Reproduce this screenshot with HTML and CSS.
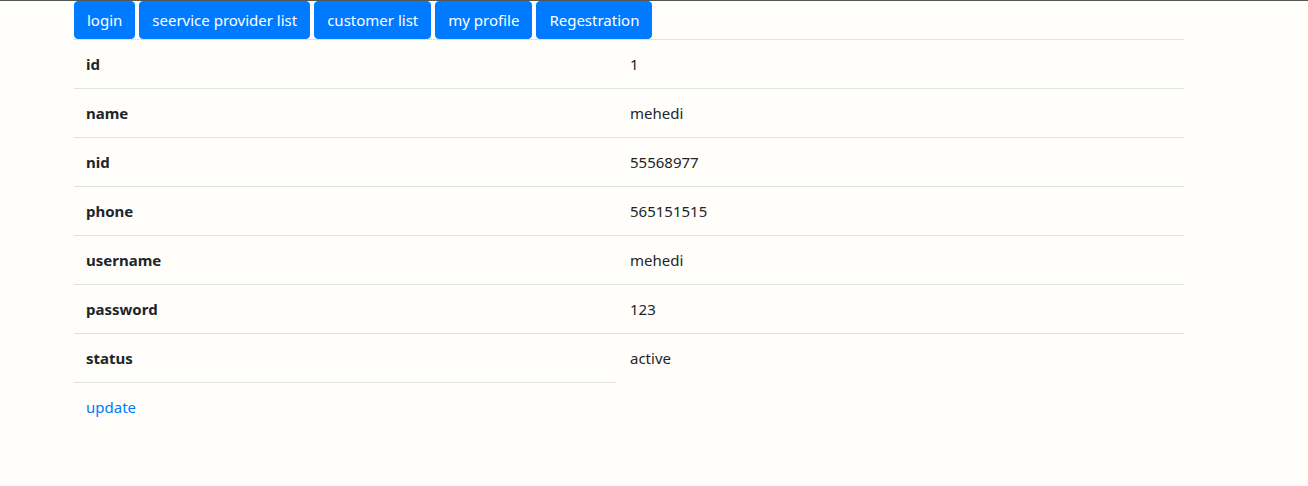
FILE: index.html
```html
<!DOCTYPE html>
<html>
<head>
<meta charset="utf-8">
<link rel="stylesheet" href="styles.css">
</head>
<body>
<div class="container">
  <nav class="nav">
    <a class="btn" href="#">login</a>
    <a class="btn" href="#">seervice provider list</a>
    <a class="btn" href="#">customer list</a>
    <a class="btn" href="#">my profile</a>
    <a class="btn" href="#">Regestration</a>
  </nav>
  <table class="table">
    <tr><th>id</th><td>1</td></tr>
    <tr><th>name</th><td>mehedi</td></tr>
    <tr><th>nid</th><td>55568977</td></tr>
    <tr><th>phone</th><td>565151515</td></tr>
    <tr><th>username</th><td>mehedi</td></tr>
    <tr><th>password</th><td>123</td></tr>
    <tr><th>status</th><td>active</td></tr>
    <tr class="last"><td class="link-cell"><a href="#" class="link">update</a></td></tr>
  </table>
</div>
</body>
</html>
```
FILE: styles.css
```css
html, body {
  margin: 0;
  padding: 0;
}
body {
  background: #fffefa;
  border-top: 1px solid #555753;
  font-family: "Noto Sans", "Open Sans", sans-serif;
  font-size: 15px;
  line-height: 24px;
  color: #212529;
}
.container {
  width: 1110px;
  padding-left: 74px;
}
.nav {
  display: flex;
  gap: 4px;
  height: 38px;
}
.btn {
  display: inline-block;
  box-sizing: border-box;
  height: 38px;
  padding: 6px 12px;
  border: 1px solid #007bff;
  border-radius: 4px;
  background: #007bff;
  color: #fff;
  text-decoration: none;
  font-size: 15px;
  line-height: 24px;
  white-space: nowrap;
}
.table {
  width: 1110px;
  border-collapse: collapse;
}
.table th, .table td {
  padding: 12px;
  border-top: 1px solid #dee2e6;
  text-align: left;
  vertical-align: top;
  line-height: 24px;
}
.table th {
  width: 518px;
  font-weight: 700;
}
.table td {
  padding-left: 14px;
}
.last td {
  border-top: 1px solid #dee2e6;
  padding-left: 12px;
}
.link {
  color: #007bff;
  text-decoration: none;
}
```
